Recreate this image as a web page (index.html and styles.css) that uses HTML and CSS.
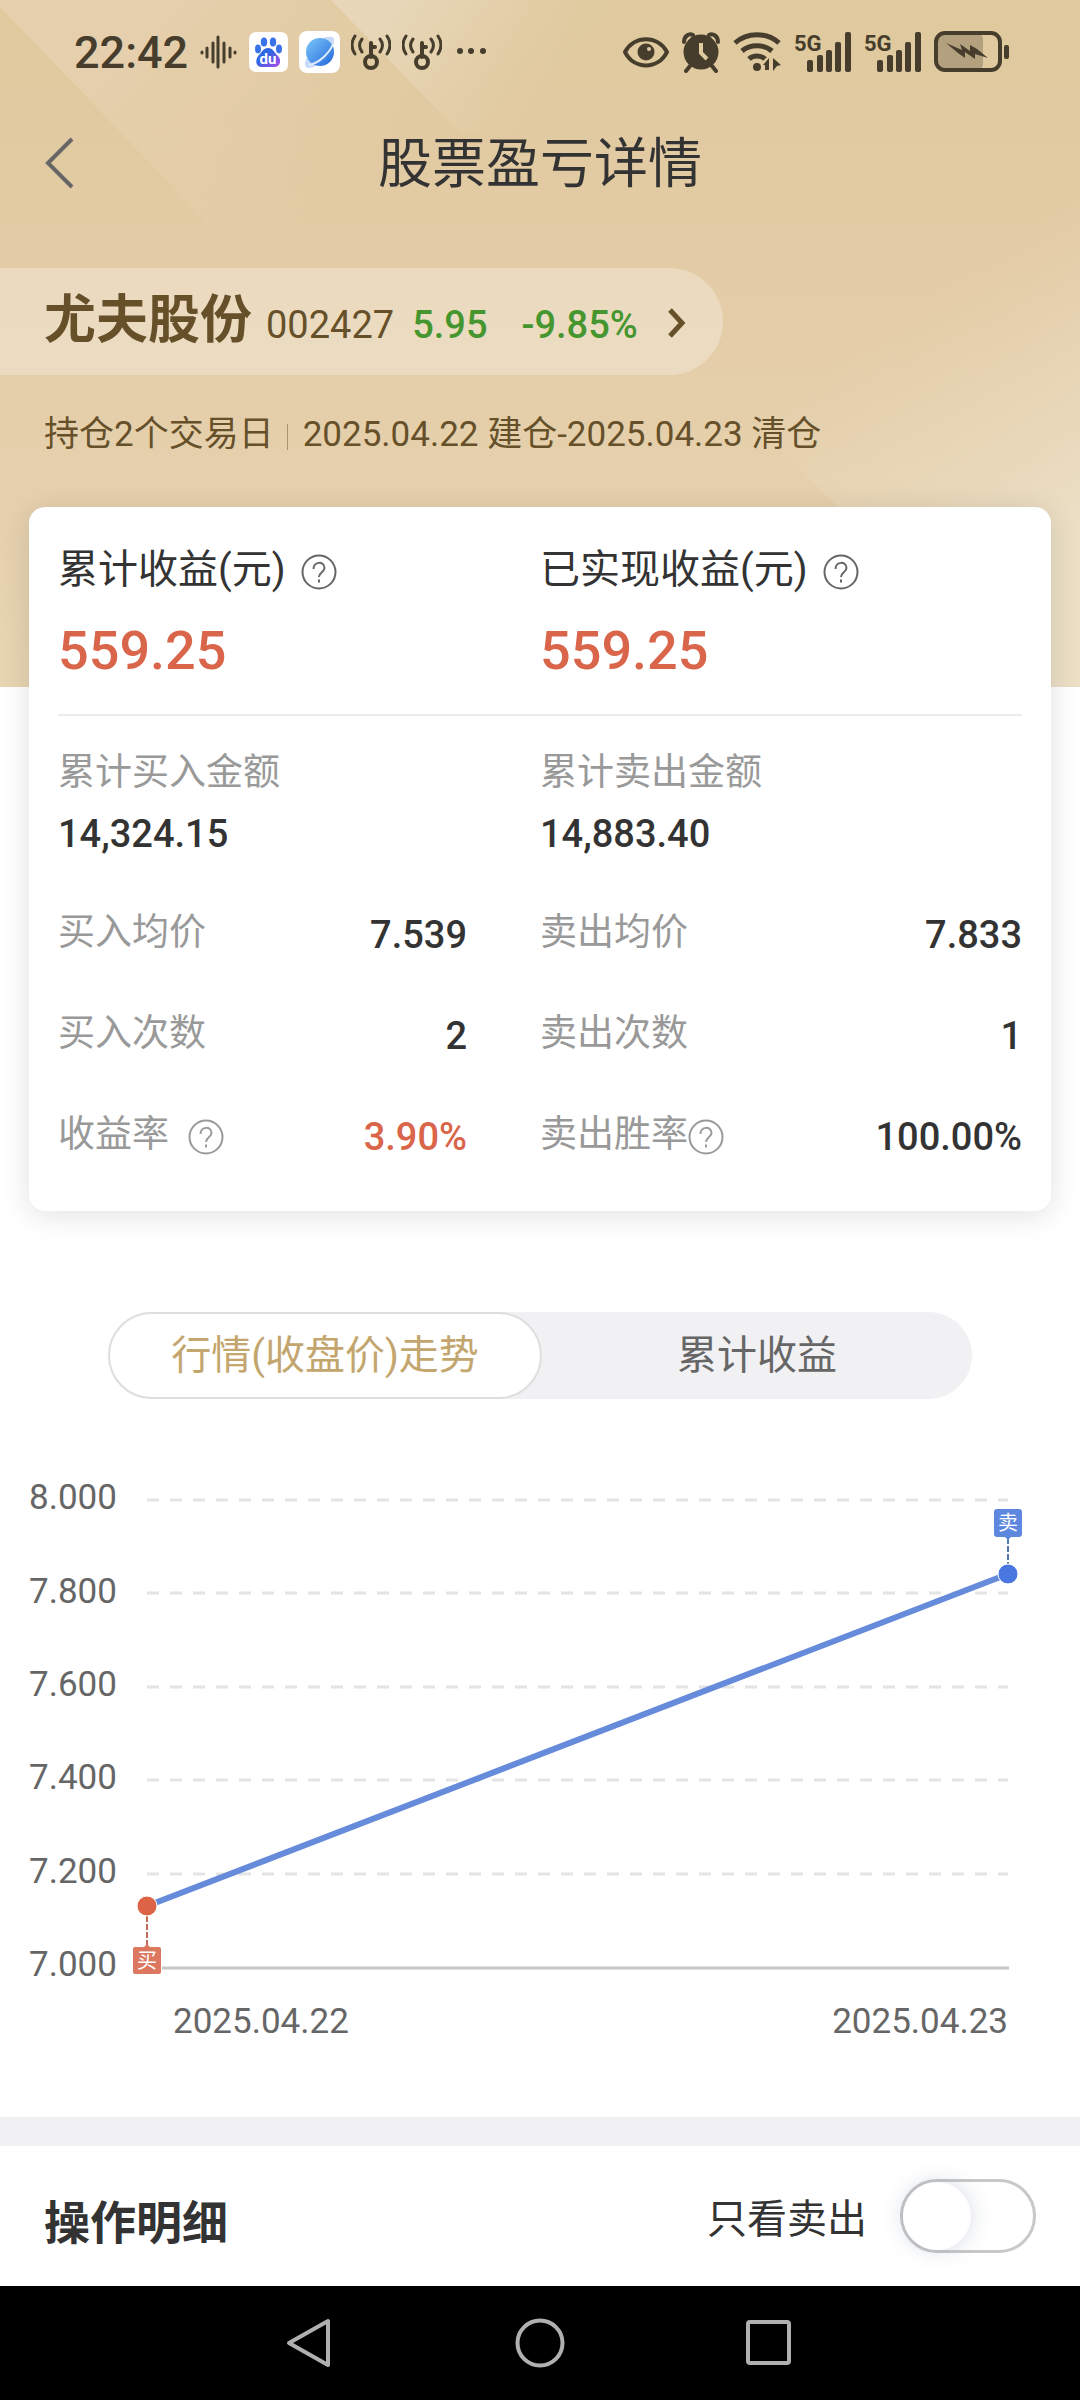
FILE: index.html
```html
<!DOCTYPE html>
<html lang="zh-CN">
<head>
    <meta charset="UTF-8">
    <meta name="viewport" content="width=device-width, initial-scale=1">
    <title>股票盈亏详情</title>
    <link rel="stylesheet" href="styles.css">
</head>
<body>
    <header class="header">
        <svg class="header-bg" viewBox="0 0 1080 687" preserveAspectRatio="none" aria-hidden="true">
            <defs>
                <linearGradient id="base" x1="0" y1="0" x2="0" y2="1">
                    <stop offset="0" stop-color="#dfc99d"/>
                    <stop offset="0.35" stop-color="#e3cba5"/>
                    <stop offset="0.75" stop-color="#e6d1ae"/>
                    <stop offset="1" stop-color="#e7d5b2"/>
                </linearGradient>
                <linearGradient id="band" gradientUnits="userSpaceOnUse" x1="90" y1="90" x2="260" y2="270">
                    <stop offset="0" stop-color="#e5cfac"/>
                    <stop offset="1" stop-color="#e5cfac" stop-opacity="0"/>
                </linearGradient>
                <linearGradient id="ray" gradientUnits="userSpaceOnUse" x1="400" y1="0" x2="540" y2="110">
                    <stop offset="0" stop-color="#e7d7b8"/>
                    <stop offset="1" stop-color="#e5d1ae" stop-opacity="0"/>
                </linearGradient>
                <linearGradient id="glow" gradientUnits="userSpaceOnUse" x1="1040" y1="560" x2="880" y2="330">
                    <stop offset="0" stop-color="#ecdfc6"/>
                    <stop offset="1" stop-color="#e8dabb" stop-opacity="0"/>
                </linearGradient>
            </defs>
            <rect width="1080" height="687" fill="url(#base)"/>
            <path d="M0 7 L260 277 L620 277 L620 0 L0 0 Z" fill="url(#band)"/>
            <path d="M331 0 L461 134 L640 134 L640 0 Z" fill="url(#ray)"/>
            <path d="M700 370 L1080 190 L1080 687 L1020 687 Z" fill="url(#glow)"/>
        </svg>

        <div class="status">
            <div class="status-left">
                <span class="time">22:42</span>
                <svg width="38" height="42" viewBox="0 0 38 42" stroke="#463d2c" stroke-width="3" stroke-linecap="round" aria-hidden="true">
                    <path d="M3 21v1M8 17v9M14 12v19M19 6v30M25 12v19M31 17v9M36 21v1"/>
                </svg>
                <svg width="40" height="42" viewBox="0 0 40 42" aria-hidden="true">
                    <defs>
                        <linearGradient id="paw" x1="0" y1="0" x2="1" y2="1">
                            <stop offset="0.4" stop-color="#2f66e4"/>
                            <stop offset="1" stop-color="#b34bea"/>
                        </linearGradient>
                    </defs>
                    <rect x="1" y="1" width="39" height="40" rx="7" fill="#fff"/>
                    <g fill="#3a72ea">
                        <ellipse cx="10" cy="18" rx="3" ry="4.4"/>
                        <ellipse cx="16" cy="11" rx="3.2" ry="4.5"/>
                        <ellipse cx="25" cy="11" rx="3.2" ry="4.5"/>
                        <ellipse cx="31" cy="18" rx="3" ry="4.4"/>
                    </g>
                    <path d="M20 17c5 0 6 4 9 7 5 4 4 12-3 12-3 0-9 0-12 0-7 0-7-8-3-12 3-3 4-7 9-7z" fill="url(#paw)"/>
                    <text x="20" y="33" class="du">du</text>
                </svg>
                <svg width="41" height="42" viewBox="0 0 41 42" aria-hidden="true">
                    <defs>
                        <linearGradient id="planet" x1="0" y1="0" x2="1" y2="1">
                            <stop offset="0" stop-color="#7cc8f8"/>
                            <stop offset="1" stop-color="#2468dc"/>
                        </linearGradient>
                    </defs>
                    <rect width="41" height="42" rx="8" fill="#fff"/>
                    <path d="M24 7c6-2 12-2 11 3 0 8-15 27-25 27-5 0-5-6-2-10z" fill="#c7daf8"/>
                    <circle cx="21" cy="21" r="14" fill="url(#planet)"/>
                    <path d="M34 13c-3 8-13 19-24 21" stroke="#e1edfd" stroke-width="2" fill="none"/>
                </svg>
                <svg width="40" height="42" viewBox="0 0 40 42" fill="none" stroke="#463d2c" stroke-width="3" stroke-linecap="round" aria-hidden="true">
                    <g id="key">
                        <path d="M4 5c-4 6-4 12 0 18M11 8c-3 4-3 9 0 13M36 5c4 6 4 12 0 18M29 8c3 4 3 9 0 13"/>
                        <path d="M20 12v14M20 16h4" stroke-width="4"/>
                        <circle cx="20" cy="31" r="6" stroke-width="4"/>
                    </g>
                </svg>
                <svg width="40" height="42" viewBox="0 0 40 42" fill="none" stroke="#463d2c" stroke-width="3" stroke-linecap="round" aria-hidden="true">
                    <use href="#key"/>
                </svg>
                <svg width="34" height="42" viewBox="0 0 34 42" fill="#463d2c" aria-hidden="true">
                    <circle cx="7" cy="20" r="3"/><circle cx="18" cy="20" r="3"/><circle cx="30" cy="20" r="3"/>
                </svg>
            </div>
            <div class="status-right">
                <svg width="46" height="42" viewBox="0 0 46 42" aria-hidden="true">
                    <path d="M2 21c9-17 33-17 42 0-9 18-33 18-42 0z" fill="none" stroke="#463d2c" stroke-width="4" stroke-linejoin="round"/>
                    <circle cx="23" cy="21" r="8.5" fill="#463d2c"/>
                    <circle cx="26" cy="18" r="2" fill="#e2cca2"/>
                </svg>
                <svg width="38" height="42" viewBox="0 0 38 42" aria-hidden="true">
                    <circle cx="19" cy="21" r="17.500" fill="#463d2c"/>
                    <path d="M2 11c0-6 5-9 9-7M36 11c0-6-5-9-9-7M8 35l-4 5M30 35l4 5" stroke="#463d2c" stroke-width="4" fill="none" stroke-linecap="round"/>
                    <path d="M19 12v10l6 6" stroke="#e0caa0" stroke-width="4" fill="none"/>
                </svg>
                <svg width="48" height="42" viewBox="0 0 48 42" fill="none" stroke="#463d2c" stroke-width="5" aria-hidden="true">
                    <path d="M2 12c12-11 32-11 44 0M9 20c8-7 22-7 30 0M16 28c4-4 12-4 16 0"/>
                    <circle cx="24" cy="36" r="4" fill="#463d2c" stroke="none"/>
                    <path d="M30 34l6-7v12h-4v-5zM40 27l8 7-4 1-4 5z" fill="#463d2c" stroke="none"/>
                </svg>
                <svg width="57" height="42" viewBox="0 0 57 42" fill="#463d2c" aria-hidden="true">
                    <g id="signal">
                        <text x="0" y="20" class="net">5G</text>
                        <rect x="13" y="29" width="6" height="12" rx="2"/>
                        <rect x="23" y="24" width="6" height="17" rx="2"/>
                        <rect x="32" y="19" width="6" height="22" rx="2"/>
                        <rect x="41" y="11" width="6" height="30" rx="2"/>
                        <rect x="51" y="1" width="6" height="40" rx="2"/>
                    </g>
                </svg>
                <svg width="57" height="42" viewBox="0 0 57 42" fill="#463d2c" aria-hidden="true">
                    <use href="#signal"/>
                </svg>
                <svg width="75" height="42" viewBox="0 0 75 42" aria-hidden="true">
                    <rect x="2" y="2" width="47" height="37" rx="6" fill="#b2a07e"/>
                    <rect x="2" y="2" width="64" height="37" rx="9" fill="none" stroke="#463d2c" stroke-width="4"/>
                    <rect x="70" y="14" width="5" height="14" rx="2" fill="#463d2c"/>
                    <path d="M12 12l16 7-2-6 10 7 0-6 7 4 11 9-13-4 0 5-10-7 0 6-7-5z" fill="#463d2c"/>
                </svg>
            </div>
        </div>

        <div class="titlebar">
            <button class="back" type="button" aria-label="返回">
                <svg width="30" height="52" viewBox="0 0 30 52" fill="none" stroke="#666" stroke-width="4" aria-hidden="true">
                    <path d="M28 2L4 26l24 24"/>
                </svg>
            </button>
            <h1>股票盈亏详情</h1>
        </div>

        <a class="stock" href="#">
            <strong>尤夫股份</strong>
            <span class="code">002427</span>
            <span class="price">5.95</span>
            <span class="change">-9.85%</span>
            <svg width="19" height="30" viewBox="0 0 19 30" fill="none" stroke="#66502a" stroke-width="5" aria-hidden="true">
                <path d="M3 2l12 13L3 28"/>
            </svg>
        </a>
        <p class="period">
            <span>持仓2个交易日</span>
            <span class="dates">2025.04.22 建仓-2025.04.23 清仓</span>
        </p>
    </header>

    <main>
        <section class="card">
            <dl class="summary">
                <div>
                    <dt>累计收益(元)
                        <svg class="help" viewBox="0 0 36 36" aria-hidden="true">
                            <g id="help">
                                <circle cx="18" cy="18" r="16.500"/>
                                <path d="M12.500 15c0-8 11-8 11-1 0 4-5 4-5.500 9M18 25.500v3"/>
                            </g>
                        </svg>
                    </dt>
                    <dd>559.25</dd>
                </div>
                <div>
                    <dt>已实现收益(元)
                        <svg class="help" viewBox="0 0 36 36" aria-hidden="true"><use href="#help"/></svg>
                    </dt>
                    <dd>559.25</dd>
                </div>
            </dl>
            <dl class="details">
                <div class="total"><dt>累计买入金额</dt><dd>14,324.15</dd></div>
                <div class="total"><dt>累计卖出金额</dt><dd>14,883.40</dd></div>
                <div class="row"><dt>买入均价</dt><dd>7.539</dd></div>
                <div class="row"><dt>卖出均价</dt><dd>7.833</dd></div>
                <div class="row"><dt>买入次数</dt><dd>2</dd></div>
                <div class="row"><dt>卖出次数</dt><dd>1</dd></div>
                <div class="row">
                    <dt class="spaced">收益率
                        <svg class="help" viewBox="0 0 36 36" aria-hidden="true"><use href="#help"/></svg>
                    </dt>
                    <dd class="up">3.90%</dd>
                </div>
                <div class="row">
                    <dt>卖出胜率
                        <svg class="help" viewBox="0 0 36 36" aria-hidden="true"><use href="#help"/></svg>
                    </dt>
                    <dd>100.00%</dd>
                </div>
            </dl>
        </section>

        <div class="tabs">
            <button class="tab active" type="button">行情(收盘价)走势</button>
            <button class="tab" type="button">累计收益</button>
        </div>

        <svg class="chart" viewBox="0 0 1080 718" role="img" aria-label="行情(收盘价)走势">
            <g class="grid">
                <path d="M147 101H1008"/>
                <path d="M147 194H1008"/>
                <path d="M147 288H1008"/>
                <path d="M147 381H1008"/>
                <path d="M147 475H1008"/>
            </g>
            <path class="axis" d="M147 569H1009"/>
            <g class="labels">
                <text x="29" y="110">8.000</text>
                <text x="29" y="204">7.800</text>
                <text x="29" y="297">7.600</text>
                <text x="29" y="390">7.400</text>
                <text x="29" y="484">7.200</text>
                <text x="29" y="577">7.000</text>
                <text x="173" y="634">2025.04.22</text>
                <text x="1008" y="634" text-anchor="end">2025.04.23</text>
            </g>
            <path class="line" d="M147 507L1008 175"/>

            <!-- buy point -->
            <rect x="131" y="546" width="31" height="31" fill="#fff"/>
            <path d="M147 517v31" stroke="#c46a55" stroke-width="2" stroke-dasharray="6 2"/>
            <circle cx="147" cy="507" r="10" fill="#dc6346" stroke="#fff"/>
            <path d="M143 549l4-4 4 4z" fill="#dc7760"/>
            <rect x="133" y="548" width="28" height="27" rx="2" fill="#dc7760"/>
            <text class="tag" x="147" y="569">买</text>

            <!-- sell point -->
            <path d="M1008 139v26" stroke="#5577ad" stroke-width="2" stroke-dasharray="6 2"/>
            <circle cx="1008" cy="175" r="10" fill="#4878df" stroke="#fff"/>
            <path d="M1004 137l4 4 4-4z" fill="#5e87df"/>
            <rect x="994" y="110" width="28" height="28" rx="3" fill="#5e87df"/>
            <text class="tag" x="1008" y="131">卖</text>
        </svg>

        <section class="records">
            <h2>操作明细</h2>
            <label for="only-sell">只看卖出</label>
            <input class="switch" type="checkbox" id="only-sell">
        </section>
    </main>

    <nav class="navbar">
        <button type="button" aria-label="返回上一页">
            <svg width="50" height="54" viewBox="0 0 50 54" aria-hidden="true"><path d="M43 5v44L4 27z"/></svg>
        </button>
        <button type="button" aria-label="主屏幕">
            <svg width="50" height="54" viewBox="0 0 50 54" aria-hidden="true"><circle cx="25" cy="27" r="22.500"/></svg>
        </button>
        <button type="button" aria-label="最近任务">
            <svg width="50" height="54" viewBox="0 0 50 54" aria-hidden="true"><rect x="3" y="6" width="41" height="41" rx="2"/></svg>
        </button>
    </nav>
</body>
</html>
```

FILE: styles.css
```css
* {
    box-sizing: border-box;
}

body {
    margin: 0;
    background: #fff;
    color: #333;
    font-family: Roboto, "Noto Sans CJK SC", sans-serif;
}

button {
    border: 0;
    padding: 0;
    background: none;
    font-family: inherit;
    cursor: pointer;
}

h1, h2, p, dl, dd {
    margin: 0;
}

svg {
    display: block;
    flex-shrink: 0;
}

/* header */
.header {
    position: relative;
    padding-bottom: 227px;
}

.header-bg {
    position: absolute;
    inset: 0;
    width: 100%;
    height: 100%;
    z-index: -1;
}

.status {
    display: flex;
    justify-content: space-between;
    align-items: center;
    height: 104px;
    padding: 0 71px 0 74px;
}

.status-left, .status-right {
    display: flex;
    align-items: center;
}

.status-left {
    gap: 11px;
}

.status-right {
    gap: 13px;
}

.time {
    font-size: 45px;
    font-weight: 500;
    color: #463d2c;
}

.du {
    font-size: 15px;
    font-weight: 700;
    fill: #fff;
    text-anchor: middle;
}

.net {
    font-size: 22px;
    font-weight: 700;
}

.titlebar {
    display: grid;
    grid-template-columns: 64px 1fr 64px;
    align-items: center;
    height: 118px;
    padding: 0 44px;
}

.titlebar h1 {
    padding-top: 4px;
    font-size: 54px;
    line-height: 78px;
    font-weight: 400;
    text-align: center;
}

.stock {
    display: flex;
    align-items: baseline;
    width: fit-content;
    height: 107px;
    margin-top: 46px;
    padding: 23px 37px 0 44px;
    border-radius: 0 54px 54px 0;
    background: rgba(255, 255, 255, 0.28);
    color: #66502a;
    font-size: 38px;
    line-height: 60px;
    text-decoration: none;
}

.stock strong {
    font-size: 52px;
    font-weight: 700;
    margin-right: 14px;
}

.code {
    margin-right: 18px;
}

.price, .change {
    color: #45962f;
    font-weight: 500;
}

.price {
    margin-right: 34px;
}

.change {
    margin-right: 29px;
}

.period {
    display: flex;
    align-items: center;
    margin-top: 35px;
    padding-left: 44px;
    color: #66502a;
    font-size: 35px;
    line-height: 50px;
}

.dates {
    position: relative;
    margin-left: 29px;
}

.dates::before {
    content: "";
    position: absolute;
    left: -16px;
    top: 14px;
    height: 26px;
    border-left: 1px solid #a8946c;
}

/* summary card */
.card {
    position: relative;
    margin: -180px 29px 0;
    padding: 33px 29px 49px;
    border-radius: 16px;
    background: #fff;
    box-shadow: 0 4px 30px rgba(0, 0, 0, 0.12);
}

.summary, .details {
    display: grid;
    grid-template-columns: 1fr 1fr;
}

.summary {
    padding-bottom: 33px;
    border-bottom: 2px solid #ececec;
}

.summary dt {
    display: flex;
    align-items: center;
    gap: 15px;
    font-size: 40px;
    line-height: 60px;
}

.summary dd {
    margin-top: 21px;
    color: #d9654a;
    font-size: 54px;
    line-height: 60px;
    font-weight: 500;
}

.help {
    width: 36px;
    height: 36px;
    margin-top: 4px;
    fill: none;
    stroke: #666;
    stroke-width: 2;
}

.details {
    row-gap: 46px;
    padding-top: 32px;
    font-size: 37px;
    line-height: 50px;
}

.details dt {
    display: flex;
    align-items: center;
    color: #999;
}

.details dd {
    font-size: 38px;
    font-weight: 500;
}

.details .help {
    stroke: #999;
}

.total dd {
    margin-top: 11px;
}

.row {
    display: flex;
    justify-content: space-between;
    align-items: flex-start;
}

.row:nth-child(odd) {
    padding-right: 73px;
}

.row dt {
    padding-top: 3px;
}

.row dd {
    padding-top: 5px;
}

.spaced {
    gap: 19px;
}

.details .up {
    color: #d9654a;
}

/* tabs */
.tabs {
    display: flex;
    margin: 101px 108px 0;
    border-radius: 44px;
    background: #f1f1f4;
}

.tab {
    flex: 1;
    height: 87px;
    padding-bottom: 8px;
    border-radius: 44px;
    color: #666;
    font-size: 40px;
}

.tab.active {
    border: 2px solid #dedede;
    background: #fff;
    color: #c3a66e;
}

/* chart */
.chart {
    width: 100%;
    height: auto;
}

.grid {
    stroke: #e4e4e4;
    stroke-width: 3;
    stroke-dasharray: 12 11;
}

.axis {
    stroke: #c8c8c8;
    stroke-width: 3;
}

.labels {
    fill: #666;
    font-size: 35px;
}

.line {
    stroke: #668bdb;
    stroke-width: 6;
}

.tag {
    fill: #fff;
    font-size: 20px;
    text-anchor: middle;
}

/* records */
.records {
    display: flex;
    align-items: center;
    height: 169px;
    padding: 0 44px;
    border-top: 29px solid #f1f1f4;
}

.records h2 {
    flex: 1;
    padding-top: 6px;
    font-size: 46px;
    font-weight: 700;
}

.records label {
    font-size: 40px;
}

.switch {
    appearance: none;
    width: 136px;
    height: 74px;
    margin: 0 0 0 33px;
    border: 3px solid #c8c8c8;
    border-radius: 37px;
    background: #fff;
}

.switch::before {
    content: "";
    display: block;
    width: 68px;
    height: 68px;
    border-radius: 50%;
    background: #fff;
    box-shadow: 0 0 20px rgba(90, 110, 140, 0.25);
}

.switch:checked::before {
    margin-left: auto;
}

/* system navigation */
.navbar {
    display: flex;
    justify-content: center;
    height: 114px;
    background: #000;
}

.navbar button {
    display: grid;
    place-items: center;
    width: 230px;
}

.navbar svg {
    fill: none;
    stroke: #b0b0b0;
    stroke-width: 4;
    stroke-linejoin: round;
}
```
